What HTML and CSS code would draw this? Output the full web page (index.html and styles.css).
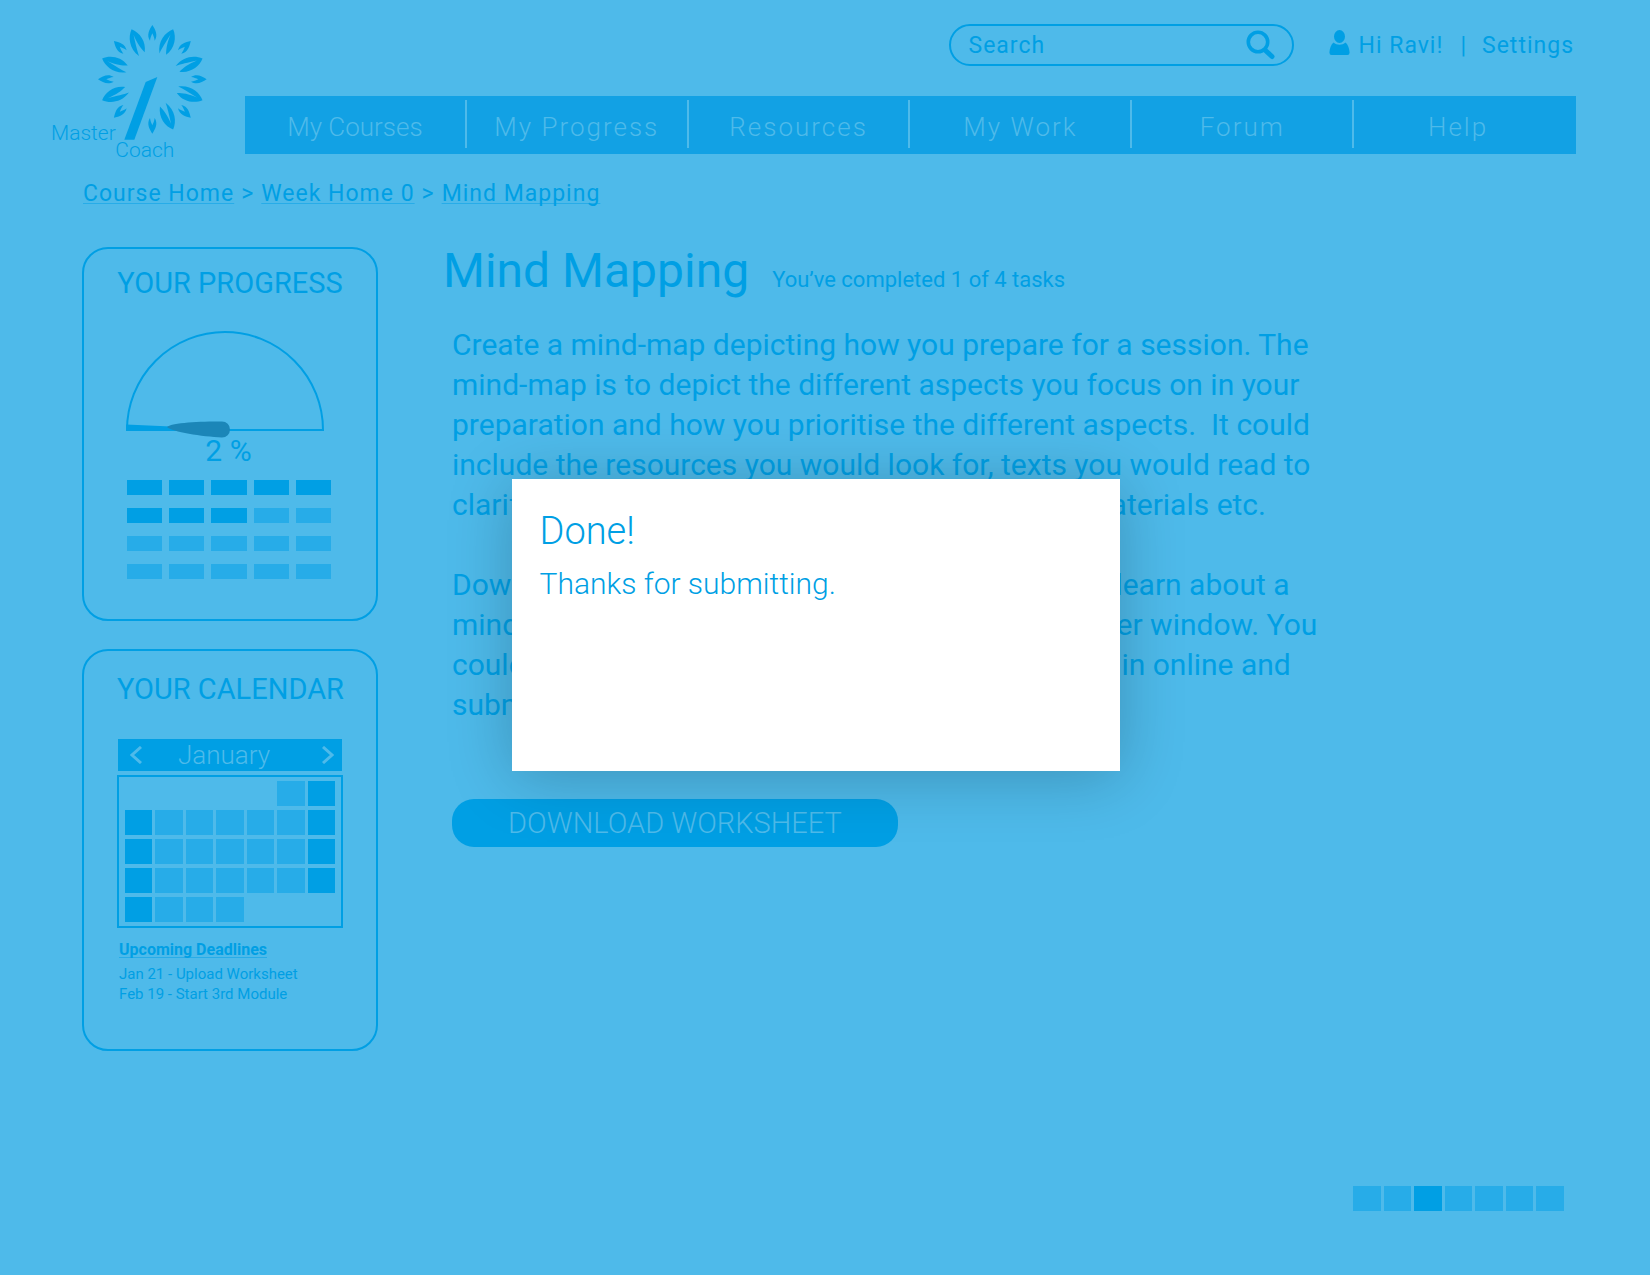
FILE: index.html
```html
<!DOCTYPE html>
<html lang="en">
<head>
<meta charset="utf-8">
<title>Mind Mapping - Master Coach</title>
<link rel="stylesheet" href="styles.css">
</head>
<body>
<header class="header">
  <a class="logo" href="#" aria-label="Master Coach">
    <svg width="159" height="138" viewBox="33 36 477 414" aria-hidden="true">
      <defs>
        <path id="leaf" d="M0-163C-19-145-29-112-10-80C-9-98-6-116-1-145C-1-116 4-98 10-84C27-112 19-145 0-163Z"/>
        <path id="bud" d="M0-163C-9-149-18-133-7-116C-6-125-3-131 0-138C3-131 6-125 7-116C18-133 9-149 0-163Z"/>
      </defs>
      <g fill="#009fe4" transform="translate(337 208)">
        <use href="#bud"/>
        <use href="#leaf" transform="rotate(22.5)"/>
        <use href="#bud" transform="rotate(45)"/>
        <use href="#leaf" transform="rotate(67.5)"/>
        <use href="#bud" transform="rotate(90)"/>
        <use href="#leaf" transform="rotate(112.5)"/>
        <use href="#bud" transform="rotate(135)"/>
        <use href="#leaf" transform="rotate(157.5)"/>
        <use href="#bud" transform="rotate(180)"/>
        <use href="#bud" transform="rotate(225)"/>
        <use href="#leaf" transform="rotate(247.5)"/>
        <use href="#bud" transform="rotate(270)"/>
        <use href="#leaf" transform="rotate(292.5)"/>
        <use href="#bud" transform="rotate(315)"/>
        <use href="#leaf" transform="rotate(337.5)"/>
        <path d="M15-7L-20 8L-84 181H-54Z"/>
      </g>
      <g class="logo-text">
        <text x="33" y="389">Master</text>
        <text x="226" y="440">Coach</text>
      </g>
    </svg>
  </a>
  <div class="header-main">
    <div class="tools">
      <form class="search" role="search">
        <input class="search-input" type="search" placeholder="Search" aria-label="Search">
        <button class="icon-button" type="button" aria-label="Run search">
          <svg width="30" height="30" viewBox="0 0 30 30" fill="none" stroke="#009fe4" stroke-linecap="round"><circle cx="12" cy="12" r="9.700" stroke-width="3.600"/><path d="M19.500 20.500L26 26.500" stroke-width="5"/></svg>
        </button>
      </form>
      <div class="account">
        <svg class="account-icon" width="21" height="25" viewBox="0 0 21 25" fill="#009fe4" aria-hidden="true"><ellipse cx="10.500" cy="6.500" rx="5.500" ry="6.500"/><path d="M4.500 12.500C8 15.500 13 15.500 16.500 12.500C19 14.500 20.300 18.500 20.600 22.500Q20.500 25 18.500 25H2.500Q.5 25 .4 22.500C.7 18.500 2 14.500 4.500 12.500Z"/></svg>
        <a class="account-name" href="#">Hi Ravi!</a>
        <span class="account-bar">|</span>
        <a href="#">Settings</a>
      </div>
    </div>
    <nav class="nav">
      <a class="nav-first" href="#">My Courses</a>
      <a href="#">My Progress</a>
      <a href="#">Resources</a>
      <a href="#">My Work</a>
      <a href="#">Forum</a>
      <a href="#">Help</a>
    </nav>
  </div>
</header>

<nav class="crumbs" aria-label="Breadcrumb">
  <a href="#">Course Home</a><span>&gt;</span><a href="#">Week Home 0</a><span>&gt;</span><a href="#">Mind Mapping</a>
</nav>

<div class="columns">
  <aside class="side">
    <section class="card">
      <h2>YOUR PROGRESS</h2>
      <svg class="gauge" width="200" height="108" viewBox="0 0 200 108" aria-hidden="true">
        <path d="M1 99A98 98 0 0 1 197 99Z" fill="none" stroke="#009fe4" stroke-width="2"/>
        <path d="M0 93.500L45 95.500V100H0Z" fill="#009fe4"/>
        <path d="M41 96C46 91.500 74 90.500 96 90.500A8 8 0 0 1 96 106.500C76 105.500 46 101 41 96Z" fill="#1b86b8"/>
      </svg>
      <p class="percent">2 %</p>
      <div class="bars">
        <i class="on"></i><i class="on"></i><i class="on"></i><i class="on"></i><i class="on"></i>
        <i class="on"></i><i class="on"></i><i class="on"></i><i></i><i></i>
        <i></i><i></i><i></i><i></i><i></i>
        <i></i><i></i><i></i><i></i><i></i>
      </div>
    </section>
    <section class="card card-calendar">
      <h2>YOUR CALENDAR</h2>
      <div class="month">
        <button class="icon-button" type="button" aria-label="Previous month"><svg width="12" height="18" viewBox="0 0 12 18" fill="none" stroke="#4ebaea" stroke-width="3"><path d="M11 1L2 9L11 17"/></svg></button>
        <span class="month-name">January</span>
        <button class="icon-button" type="button" aria-label="Next month"><svg width="12" height="18" viewBox="0 0 12 18" fill="none" stroke="#4ebaea" stroke-width="3"><path d="M1 1L10 9L1 17"/></svg></button>
      </div>
      <div class="days">
        <i class="first"></i><i class="on"></i>
        <i class="on"></i><i></i><i></i><i></i><i></i><i></i><i class="on"></i>
        <i class="on"></i><i></i><i></i><i></i><i></i><i></i><i class="on"></i>
        <i class="on"></i><i></i><i></i><i></i><i></i><i></i><i class="on"></i>
        <i class="on"></i><i></i><i></i><i></i>
      </div>
      <h3>Upcoming Deadlines</h3>
      <ul class="deadlines">
        <li>Jan 21 - Upload Worksheet</li>
        <li>Feb 19 - Start 3rd Module</li>
      </ul>
    </section>
  </aside>

  <main class="main">
    <div class="title">
      <h1>Mind Mapping</h1>
      <p>You’ve completed 1 of 4 tasks</p>
    </div>
    <div class="copy">
      <p>Create a mind-map depicting how you prepare for a session. The<br>mind-map is to depict the different aspects you focus on in your<br>preparation and how you prioritise the different aspects.&nbsp; It could<br>include the resources you would look for, texts you would read to<br>clarify concepts, websites, videos and teaching materials etc.</p>
      <p>Download the worksheet given below to start and learn about a<br>mind-map. It will always open up in another browser window. You<br>could either print it out and fill it in by hand or fill it in online and<br>submit it.</p>
    </div>
    <button class="download" type="button">DOWNLOAD WORKSHEET</button>
  </main>
</div>

<div class="pager" aria-label="Step 3 of 7">
  <i></i><i></i><i class="on"></i><i></i><i></i><i></i><i></i>
</div>

<dialog class="modal" open aria-labelledby="modal-title">
  <h2 id="modal-title">Done!</h2>
  <p>Thanks for submitting.</p>
</dialog>
</body>
</html>
```
FILE: styles.css
```css
* { box-sizing: border-box; }

body {
  margin: 0;
  padding: 22px 74px 64px 51px;
  min-height: 100vh;
  background: #4ebaea;
  color: #009fe4;
  font-family: Roboto, "Liberation Sans", sans-serif;
}

h1, h2, h3, p, ul { margin: 0; padding: 0; font-weight: 400; }
a { color: inherit; text-decoration: none; }

.icon-button {
  display: flex;
  padding: 0;
  border: 0;
  background: none;
}

.header { display: flex; gap: 35px; }
.logo { flex: none; }
.logo svg { display: block; overflow: visible; }
.logo-text { fill: #009fe4; font-size: 63px; font-weight: 300; }
.header-main { flex: 1; }

.tools {
  display: flex;
  justify-content: flex-end;
  align-items: center;
  gap: 35px;
  padding: 2px 2px 0 0;
}

.search {
  display: flex;
  align-items: center;
  width: 345px;
  height: 42px;
  padding: 0 16px 0 18px;
  border: 2px solid #009fe4;
  border-radius: 21px;
}

.search-input {
  flex: 1;
  min-width: 0;
  padding: 0;
  border: 0;
  outline: 0;
  background: none;
  color: #009fe4;
  font: inherit;
  font-size: 23px;
  letter-spacing: 1px;
}
.search-input::placeholder { color: #009fe4; opacity: 1; }

.account {
  display: flex;
  align-items: center;
  font-size: 23px;
  letter-spacing: 1px;
}
.account-icon { margin-bottom: 5px; }
.account-name { margin-left: 9px; }
.account-bar { margin: 0 15px 0 17px; }

.nav {
  display: grid;
  grid-template-columns: repeat(6, 1fr);
  height: 58px;
  margin-top: 30px;
  padding: 4px 0 6px;
  background: #12a1e4;
  color: #4ebaea;
  font-size: 26px;
  font-weight: 300;
  line-height: 54px;
  text-align: center;
}
.nav a { height: 48px; border-right: 2px solid #4ebaea; letter-spacing: 2px; }
.nav a:last-child { padding-right: 14px; border-right: 0; }
.nav .nav-first { letter-spacing: 0; }

.crumbs {
  display: flex;
  gap: 7px;
  margin: 21px 0 0 32px;
  font-size: 23px;
  line-height: 26px;
  letter-spacing: 1px;
}
.crumbs a {
  text-decoration: underline 1px #27ace8;
  text-underline-offset: 2px;
  text-decoration-skip-ink: none;
}

.columns {
  display: flex;
  gap: 65px;
  margin: 40px 0 0 31px;
}
.side { flex: none; width: 296px; }

.card {
  height: 374px;
  padding: 17px 33px;
  border: 2px solid #009fe4;
  border-radius: 26px;
}
.card h2 {
  font-size: 29px;
  line-height: 34px;
  text-align: center;
  white-space: nowrap;
}
.gauge { display: block; margin: 31px 0 0 9px; }
.percent {
  padding-right: 3px;
  font-size: 30px;
  line-height: 24px;
  text-align: center;
}
.bars {
  display: grid;
  grid-template-columns: repeat(5, 1fr);
  gap: 13px 7px;
  width: 204px;
  margin: 17px 0 0 10px;
}
.bars i { height: 15px; background: #27ace8; }
i.on { background: #009fe4; }

.card-calendar {
  height: 402px;
  margin-top: 28px;
  padding-top: 21px;
}
.month {
  display: flex;
  justify-content: space-between;
  align-items: center;
  height: 32px;
  margin: 33px 1px 0;
  padding: 0 8px 0 12px;
  background: #009fe4;
  color: #4ebaea;
  font-size: 26px;
  font-weight: 300;
}
.month-name { padding-right: 16px; }
.days {
  display: grid;
  grid-template-columns: repeat(7, 1fr);
  gap: 4px 3px;
  margin-top: 4px;
  padding: 4px 6px;
  border: 2px solid #009fe4;
}
.days i { height: 25px; background: #27ace8; }
.days .first { grid-column: 6; }
.days i.on, .bars i.on, .pager i.on { background: #009fe4; }
.card h3 {
  margin: 13px 0 0 2px;
  font-size: 16px;
  font-weight: 700;
  line-height: 18px;
  text-decoration: underline 1px #27ace8;
  text-underline-offset: 2px;
  text-decoration-skip-ink: none;
}
.deadlines {
  margin: 5px 0 0 2px;
  font-size: 15px;
  line-height: 20px;
  list-style: none;
}

.main { flex: 1; }
.title { display: flex; align-items: baseline; gap: 23px; }
.title h1 { font-size: 48px; line-height: 48px; }
.title p { font-size: 22px; }
.copy {
  margin: 30px 0 0 9px;
  font-size: 30px;
  line-height: 40px;
  white-space: nowrap;
}
.copy p + p { margin-top: 40px; }

.download {
  display: block;
  width: 446px;
  height: 48px;
  margin: 74px 0 0 9px;
  padding: 0;
  border: 0;
  border-radius: 22px;
  background: #009fe4;
  color: #4ebaea;
  font: inherit;
  font-size: 29px;
  font-weight: 300;
}

.pager {
  display: grid;
  grid-template-columns: repeat(7, 1fr);
  gap: 3px;
  width: 211px;
  margin: 135px 12px 0 auto;
}
.pager i { height: 25px; background: #27ace8; }

.modal {
  position: absolute;
  top: 479px;
  left: 31%;
  width: 608px;
  height: 292px;
  margin: 0;
  padding: 30px 28px;
  border: 0;
  background: #fff;
  color: #009fe4;
  box-shadow: 0 6px 60px rgba(0, 0, 0, .22);
  font-weight: 300;
}
.modal h2 { font-size: 38px; font-weight: 300; line-height: 44px; }
.modal p { margin-top: 14px; font-size: 30px; font-weight: 300; line-height: 34px; }
```
